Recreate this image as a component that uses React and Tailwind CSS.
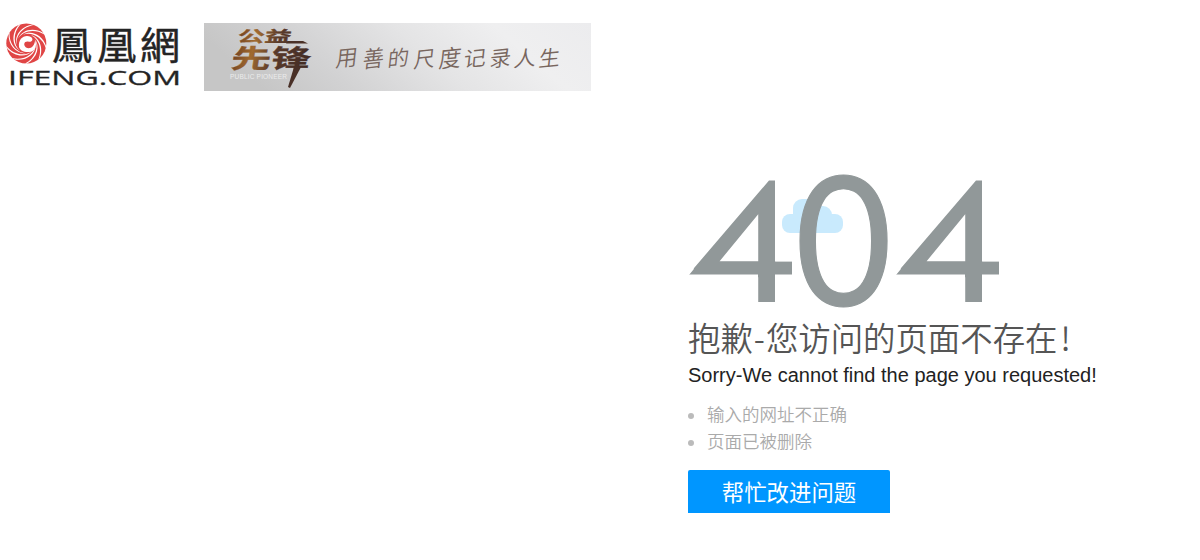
import React from "react";

const SLOGAN = [
  ["用", 335, 67, 0.98, 1.02],
  ["善", 362, 68, 0.95, 1.05],
  ["的", 387, 67, 0.95, 0.98],
  ["尺", 413, 68, 0.95, 1],
  ["度", 438, 68, 1, 1.08],
  ["记", 463, 67, 1, 0.95],
  ["录", 489, 67, 0.95, 0.98],
  ["人", 513, 67, 1, 0.95],
  ["生", 538, 67, 0.95, 0.98],
];

const ARMS = [0, 40, 80, 120, 160, 200, 240, 280, 320];

function Logo() {
  return (
    <svg className="h-[76px] w-[184px] shrink-0" viewBox="2 15 184 76" aria-label="IFENG.COM">
      <circle cx="26.3" cy="43.5" r="20" fill="#e04545" />
      <g fill="#fff">
        {ARMS.map((a) => (
          <path key={a} transform={`translate(26.3 43.5) rotate(${a})`} d="M-8 -5C-4 -12.500 8 -15.500 18 -9L17.200 -10.500C7 -17 -5 -13.500 -8 -5Z" />
        ))}
      </g>
      <path d="M19 47C18 38 25 34 31 37C34 39 32 43 28 41.500C24 41 23 45 26 47.500C30 50 35 46 35 40C38 46 34 53 28 52C23 52 20 50 19 47Z" fill="#fff" />
      <g fill="#242424" stroke="#242424" strokeWidth=".5" fontFamily="'Noto Sans CJK TC', sans-serif" fontSize="40">
        <text transform="translate(52 59) scale(1 .94)">鳳</text>
        <text transform="translate(97 59) scale(.99 .94)">凰</text>
        <text transform="translate(140 59) scale(1 .94)">網</text>
      </g>
      <text x="8" y="84.5" fill="#242424" stroke="#242424" strokeWidth=".3" fontFamily="'Open Sans', sans-serif" fontSize="20" textLength="173" lengthAdjust="spacingAndGlyphs">
        IFENG.COM
      </text>
    </svg>
  );
}

function Banner() {
  return (
    <svg className="h-[68px] w-[387px] shrink-0" viewBox="204 23 387 68" aria-label="公益先锋">
      <defs>
        <linearGradient id="silver" x1="0" y1="0.2" x2="1" y2="0">
          <stop offset="0" stopColor="#c6c6c6" />
          <stop offset=".22" stopColor="#d2d2d3" />
          <stop offset=".5" stopColor="#e4e4e5" />
          <stop offset=".75" stopColor="#efeff0" />
          <stop offset="1" stopColor="#ececee" />
        </linearGradient>
        <linearGradient id="bronze" gradientUnits="userSpaceOnUse" x1="0" y1="0" x2="80" y2="10">
          <stop offset="0" stopColor="#744421" />
          <stop offset=".22" stopColor="#a06a30" />
          <stop offset=".5" stopColor="#5a3a2a" />
          <stop offset="1" stopColor="#3f2a24" />
        </linearGradient>
      </defs>
      <rect x="203" y="23" width="389" height="68" fill="url(#silver)" />
      <g fill="url(#bronze)" stroke="url(#bronze)" strokeWidth=".3" fontFamily="'Noto Sans CJK SC', sans-serif" fontWeight="700">
        <text transform="translate(237 42) skewX(-8)" fontSize="15.5" textLength="54" lengthAdjust="spacingAndGlyphs">公益</text>
        <text transform="translate(230 68) skewX(-8)" fontSize="26" textLength="80" lengthAdjust="spacingAndGlyphs">先锋</text>
      </g>
      <path d="M288 41H303L308 43.5H286Z" fill="#4b3127" />
      <path d="M294 67H301L290 88L288 87Z" fill="#493027" />
      <text x="230" y="79" fontFamily="'Liberation Sans', sans-serif" fontSize="6.5" fill="#ececec" textLength="57">PUBLIC PIONEER</text>
      <g fill="#78665e" fontFamily="'Noto Sans CJK SC', sans-serif" fontWeight="350">
        {SLOGAN.map(([c, x, y, sx, sy]) => (
          <text key={c} fontSize="22" transform={`translate(${x} ${y}) skewX(-12) rotate(-6) scale(${sx} ${sy})`}>{c}</text>
        ))}
      </g>
    </svg>
  );
}

function Four() {
  return (
    <g clipPath="url(#slant)">
      <text transform="translate(696.5 305.500) scale(1 .92)" fontSize="180" fontWeight="100" strokeWidth="15.500" strokeMiterlimit="8">4</text>
    </g>
  );
}

function ErrorCode() {
  return (
    <svg className="block h-[154px] w-[320px]" viewBox="688 156 320 154" aria-label="404">
      <defs>
        <clipPath id="slant" clipPathUnits="userSpaceOnUse">
          <path d="M688.500 274.500L769 180.500H775V261.500H792V274.500H775V302H758V274.500Z" />
        </clipPath>
      </defs>
      <g fill="#c9eafd">
        <rect x="782" y="214" width="61" height="19" rx="8" />
        <rect x="793" y="199" width="24" height="28" rx="9" />
        <rect x="807" y="206" width="25" height="24" rx="9" />
      </g>
      <g fill="#919899" stroke="#919899" fontFamily="Lato, sans-serif">
        <Four />
        <text transform="translate(795 305.500) scale(.93 1)" fontSize="180" strokeWidth="1.2">0</text>
        <g transform="translate(207 0)">
          <Four />
        </g>
      </g>
    </svg>
  );
}

export default function App() {
  return (
    <div className="h-[560px] w-[1200px] overflow-hidden bg-white font-['Liberation_Sans','Noto_Sans_CJK_SC',sans-serif]">
      <header className="flex items-start pt-[15px] pl-0.5">
        <Logo />
        <div className="pt-2 pl-[18px]">
          <Banner />
        </div>
      </header>
      <main className="ml-[688px] pt-[65px]">
        <ErrorCode />
        <h1 className="mt-[7px] h-[45px] whitespace-nowrap font-['Noto_Sans_CJK_SC',sans-serif] text-[32.4px] leading-[40px] font-[350] text-[#555]">
          抱歉<span className="mx-[1px]">-</span>您访问的页面不存在<span className="ml-[3px]">!</span>
        </h1>
        <p className="h-[30px] whitespace-nowrap text-[20px] leading-[26px] text-[#222]">
          Sorry-We cannot find the page you requested!
        </p>
        <ul className="mt-[10px] text-[17.5px] leading-[27px] font-[350] text-[#aaa]">
          <li className="flex items-center gap-[13px]"><span className="size-1.5 rounded-full bg-[#bbb]" />输入的网址不正确</li>
          <li className="flex items-center gap-[13px]"><span className="size-1.5 rounded-full bg-[#bbb]" />页面已被删除</li>
        </ul>
        <button className="mt-[14px] block h-[43px] w-[202px] rounded-t-xs bg-[#0096ff] pt-[4px] text-[22.4px] leading-[39px] text-white">
          帮忙改进问题
        </button>
      </main>
    </div>
  );
}
